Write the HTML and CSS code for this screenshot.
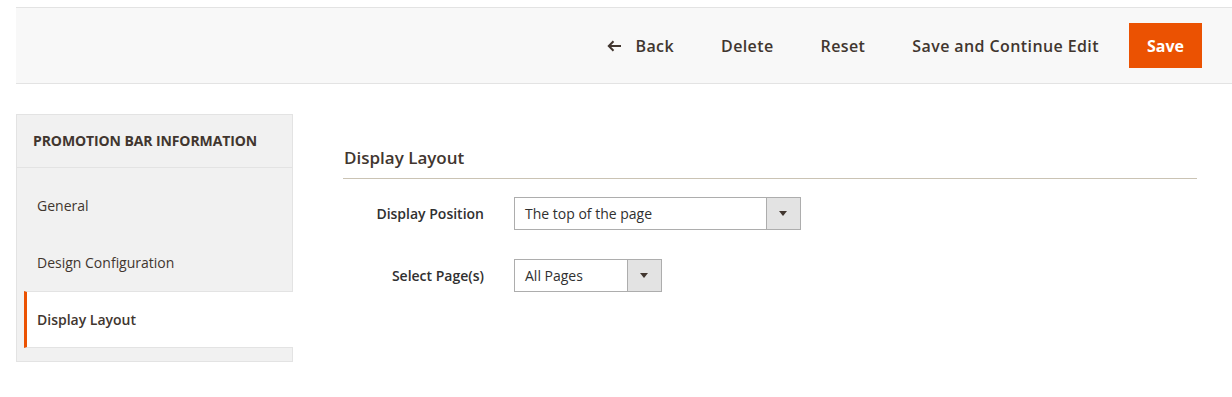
FILE: index.html
```html
<!DOCTYPE html>
<html lang="en">
<head>
    <meta charset="UTF-8">
    <title>Promotion Bar - Display Layout</title>
    <link rel="stylesheet" href="styles.css">
</head>
<body>
    <div class="page-actions">
        <a class="action back" href="#">
            <svg class="back-icon" width="14" height="12" viewBox="0 0 14 12">
                <path d="M14 6H2M6.5 1.3L1.8 6l4.7 4.7" fill="none" stroke="#41362f" stroke-width="2"/>
            </svg>
            Back
        </a>
        <a class="action" href="#">Delete</a>
        <a class="action" href="#">Reset</a>
        <a class="action" href="#">Save and Continue Edit</a>
        <button class="save-button">Save</button>
    </div>

    <div class="main">
        <div class="sidebar">
            <div class="sidebar-title">Promotion Bar Information</div>
            <ul class="tabs">
                <li><a href="#">General</a></li>
                <li><a href="#">Design Configuration</a></li>
                <li class="active"><a href="#">Display Layout</a></li>
            </ul>
        </div>

        <div class="content">
            <h2 class="legend">Display Layout</h2>
            <div class="field">
                <label class="field-label">Display Position</label>
                <div class="select wide">
                    <span class="select-value">The top of the page</span>
                    <span class="select-arrow"></span>
                </div>
            </div>
            <div class="field">
                <label class="field-label">Select Page(s)</label>
                <div class="select narrow">
                    <span class="select-value">All Pages</span>
                    <span class="select-arrow"></span>
                </div>
            </div>
        </div>
    </div>
</body>
</html>
```

FILE: styles.css
```css
body {
    margin: 0;
    font-family: 'Open Sans', 'Liberation Sans', sans-serif;
    background-color: #fff;
    color: #303030;
}
.page-actions {
    margin: 7px 0 0 16px;
    height: 75px;
    background-color: #f8f8f8;
    border-top: 1px solid #e3e3e3;
    border-bottom: 1px solid #e3e3e3;
    display: flex;
    align-items: center;
    justify-content: flex-end;
    padding-right: 30px;
}
.action {
    display: flex;
    align-items: center;
    color: #41362f;
    font-size: 16px;
    font-weight: 600;
    text-decoration: none;
    margin-left: 47px;
    letter-spacing: 0.4px;
}
.back-icon {
    margin-right: 14px;
}
.save-button {
    margin-left: 30px;
    height: 45px;
    padding: 0 18px;
    border: none;
    background-color: #eb5202;
    color: #fff;
    font-family: inherit;
    font-size: 16px;
    font-weight: 700;
}
.main {
    display: flex;
    align-items: flex-start;
    margin-top: 30px;
    padding-left: 16px;
    padding-right: 35px;
}
.sidebar {
    width: 275px;
    background-color: #f1f1f1;
    border: 1px solid #e3e3e3;
    padding-bottom: 13px;
    flex-shrink: 0;
}
.sidebar-title {
    height: 52px;
    line-height: 52px;
    padding-left: 16px;
    border-bottom: 1px solid #e3e3e3;
    font-size: 14px;
    font-weight: 700;
    letter-spacing: -0.1px;
    text-transform: uppercase;
    color: #41362f;
}
.tabs {
    list-style: none;
    margin: 0;
    padding: 9px 0 0 0;
}
.tabs li {
    height: 57px;
    margin-left: 7px;
    border-left: 3px solid transparent;
    box-sizing: border-box;
}
.tabs li a {
    display: block;
    padding-top: 1px;
    line-height: 56px;
    padding-left: 10px;
    font-size: 14px;
    color: #41362f;
    text-decoration: none;
}
.tabs li.active {
    background-color: #fff;
    border-left-color: #eb5202;
    border-top: 1px solid #e3e3e3;
    border-bottom: 1px solid #e3e3e3;
    margin-right: -1px;
}
.tabs li.active a {
    padding-top: 0;
    line-height: 55px;
    font-weight: 600;
}
.content {
    flex: 1;
    margin-left: 50px;
    padding-top: 32px;
}
.legend {
    margin: 0;
    padding: 0 0 9px 1px;
    font-size: 17px;
    font-weight: 600;
    color: #41362f;
    border-bottom: 1px solid #cac3b4;
}
.field {
    display: flex;
    align-items: center;
    margin-top: 18px;
}
.field + .field {
    margin-top: 29px;
}
.field-label {
    width: 141px;
    text-align: right;
    font-size: 14px;
    font-weight: 600;
    color: #303030;
    margin-right: 30px;
}
.select {
    display: flex;
    height: 33px;
    box-sizing: border-box;
    border: 1px solid #adadad;
    background-color: #fff;
}
.select.wide {
    width: 287px;
}
.select.narrow {
    width: 148px;
}
.select-value {
    flex: 1;
    line-height: 31px;
    padding-left: 10px;
    font-size: 14px;
    color: #303030;
}
.select-arrow {
    width: 33px;
    background-color: #e3e3e3;
    border-left: 1px solid #adadad;
    position: relative;
}
.select-arrow::after {
    content: '';
    position: absolute;
    left: 12px;
    top: 13px;
    border-left: 4px solid transparent;
    border-right: 4px solid transparent;
    border-top: 5px solid #41362f;
}
```
